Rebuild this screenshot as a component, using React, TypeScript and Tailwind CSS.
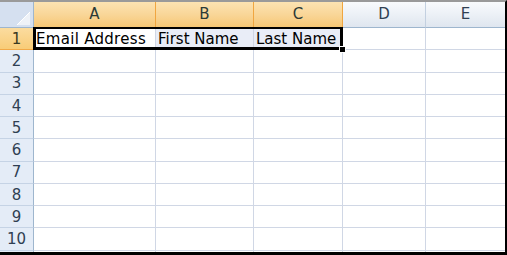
import React from "react";

const font = "font-['DejaVu_Sans',sans-serif]";

function RowHeader({ n, selected }: { n: number; selected?: boolean }) {
  return (
    <div
      className={
        selected
          ? "w-[34px] shrink-0 h-full flex items-center justify-center pt-[1px] border-r border-b border-r-[#f29536] border-b-[#f1a948] bg-gradient-to-b from-[#fbdc9f] to-[#f8cc77] text-[15px] text-[#3a3a22]"
          : "w-[34px] shrink-0 h-full flex items-center justify-center pt-[1px] border-r border-b border-r-[#9eb6ce] border-b-[#c5d3e5] bg-[#e4ecf7] text-[15px] text-[#2f3f52]"
      }
    >
      {n}
    </div>
  );
}

function EmptyRow({ n }: { n: number }) {
  return (
    <div className="flex h-[22.25px] shrink-0">
      <RowHeader n={n} />
      <div className="w-[122px] shrink-0 border-r border-b border-[#d0d7e5]" />
      <div className="w-[98px] shrink-0 border-r border-b border-[#d0d7e5]" />
      <div className="w-[89px] shrink-0 border-r border-b border-[#d0d7e5]" />
      <div className="w-[83px] shrink-0 border-r border-b border-[#d0d7e5]" />
      <div className="flex-1 border-b border-[#d0d7e5]" />
    </div>
  );
}

export default function App() {
  return (
    <div
      className={`${font} relative w-[507px] h-[255px] overflow-hidden bg-white border-t-2 border-t-[#9a9a9a] border-r-2 border-r-black border-b-[3px] border-b-black flex flex-col`}
    >
      {/* column header row */}
      <div className="flex h-[26px] shrink-0">
        <div className="relative w-[34px] shrink-0 h-full border-r border-b border-r-[#9eb6ce] border-b-[#9eb6ce] bg-[#d5e0f0]">
          <svg className="absolute right-[2px] bottom-[2px]" width="14" height="13" viewBox="0 0 14 13">
            <polygon points="13,0 13,13 0,13" fill="#eef2f8" />
            <line x1="13" y1="0" x2="0" y2="13" stroke="#ffffff" strokeWidth="1" />
          </svg>
        </div>
        <div className="w-[122px] shrink-0 h-full flex items-center justify-center border-r border-b border-r-[#f0a640] border-b-[#f29536] bg-gradient-to-b from-[#fce3b2] via-[#f9d698] to-[#f7c774] text-[15px] text-[#2c3a36]">
          A
        </div>
        <div className="w-[98px] shrink-0 h-full flex items-center justify-center border-r border-b border-r-[#f0a640] border-b-[#f29536] bg-gradient-to-b from-[#fce3b2] via-[#f9d698] to-[#f7c774] text-[15px] text-[#2c3a36]">
          B
        </div>
        <div className="w-[89px] shrink-0 h-full flex items-center justify-center border-r border-b border-r-[#f0a640] border-b-[#f29536] bg-gradient-to-b from-[#fce3b2] via-[#f9d698] to-[#f7c774] text-[15px] text-[#2c3a36]">
          C
        </div>
        <div className="w-[83px] shrink-0 h-full flex items-center justify-center border-r border-b border-r-[#c3d0e0] border-b-[#9eb6ce] bg-gradient-to-b from-[#f9fbfd] to-[#dfe6ef] text-[15px] text-[#2f3f52]">
          D
        </div>
        <div className="flex-1 h-full flex items-center justify-center border-b border-b-[#9eb6ce] bg-gradient-to-b from-[#f9fbfd] to-[#dfe6ef] text-[15px] text-[#2f3f52]">
          E
        </div>
      </div>

      {/* row 1 */}
      <div className="flex h-[22.25px] shrink-0">
        <RowHeader n={1} selected />
        <div className="w-[122px] shrink-0 border-r border-b border-[#d0d7e5] bg-white flex items-center pl-[2px] pt-[2px] text-[15px] tracking-[0.3px] text-black whitespace-nowrap overflow-hidden">
          Email Address
        </div>
        <div className="w-[98px] shrink-0 border-r border-b border-[#d0d7e5] bg-[#e9edf7] flex items-center pl-[2px] pt-[2px] text-[15px] text-black whitespace-nowrap overflow-hidden">
          First Name
        </div>
        <div className="w-[89px] shrink-0 border-r border-b border-[#d0d7e5] bg-[#e9edf7] flex items-center pl-[2px] pt-[2px] text-[15px] text-black whitespace-nowrap overflow-hidden">
          Last Name
        </div>
        <div className="w-[83px] shrink-0 border-r border-b border-[#d0d7e5]" />
        <div className="flex-1 border-b border-[#d0d7e5]" />
      </div>

      {[2, 3, 4, 5, 6, 7, 8, 9, 10].map((n) => (
        <EmptyRow key={n} n={n} />
      ))}

      {/* partial row 11 */}
      <div className="flex flex-1">
        <div className="w-[34px] shrink-0 border-r border-r-[#9eb6ce] bg-[#e4ecf7]" />
        <div className="w-[122px] shrink-0 border-r border-[#d0d7e5]" />
        <div className="w-[98px] shrink-0 border-r border-[#d0d7e5]" />
        <div className="w-[89px] shrink-0 border-r border-[#d0d7e5]" />
        <div className="w-[83px] shrink-0 border-r border-[#d0d7e5]" />
        <div className="flex-1" />
      </div>

      {/* selection outline */}
      <div className="absolute left-[33px] top-[25px] w-[310px] h-[23px] border-[3px] border-t-2 border-black pointer-events-none" />
      {/* fill handle */}
      <div className="absolute left-[339px] top-[44px] w-[7px] h-[7px] bg-black border border-white pointer-events-none" />
    </div>
  );
}
